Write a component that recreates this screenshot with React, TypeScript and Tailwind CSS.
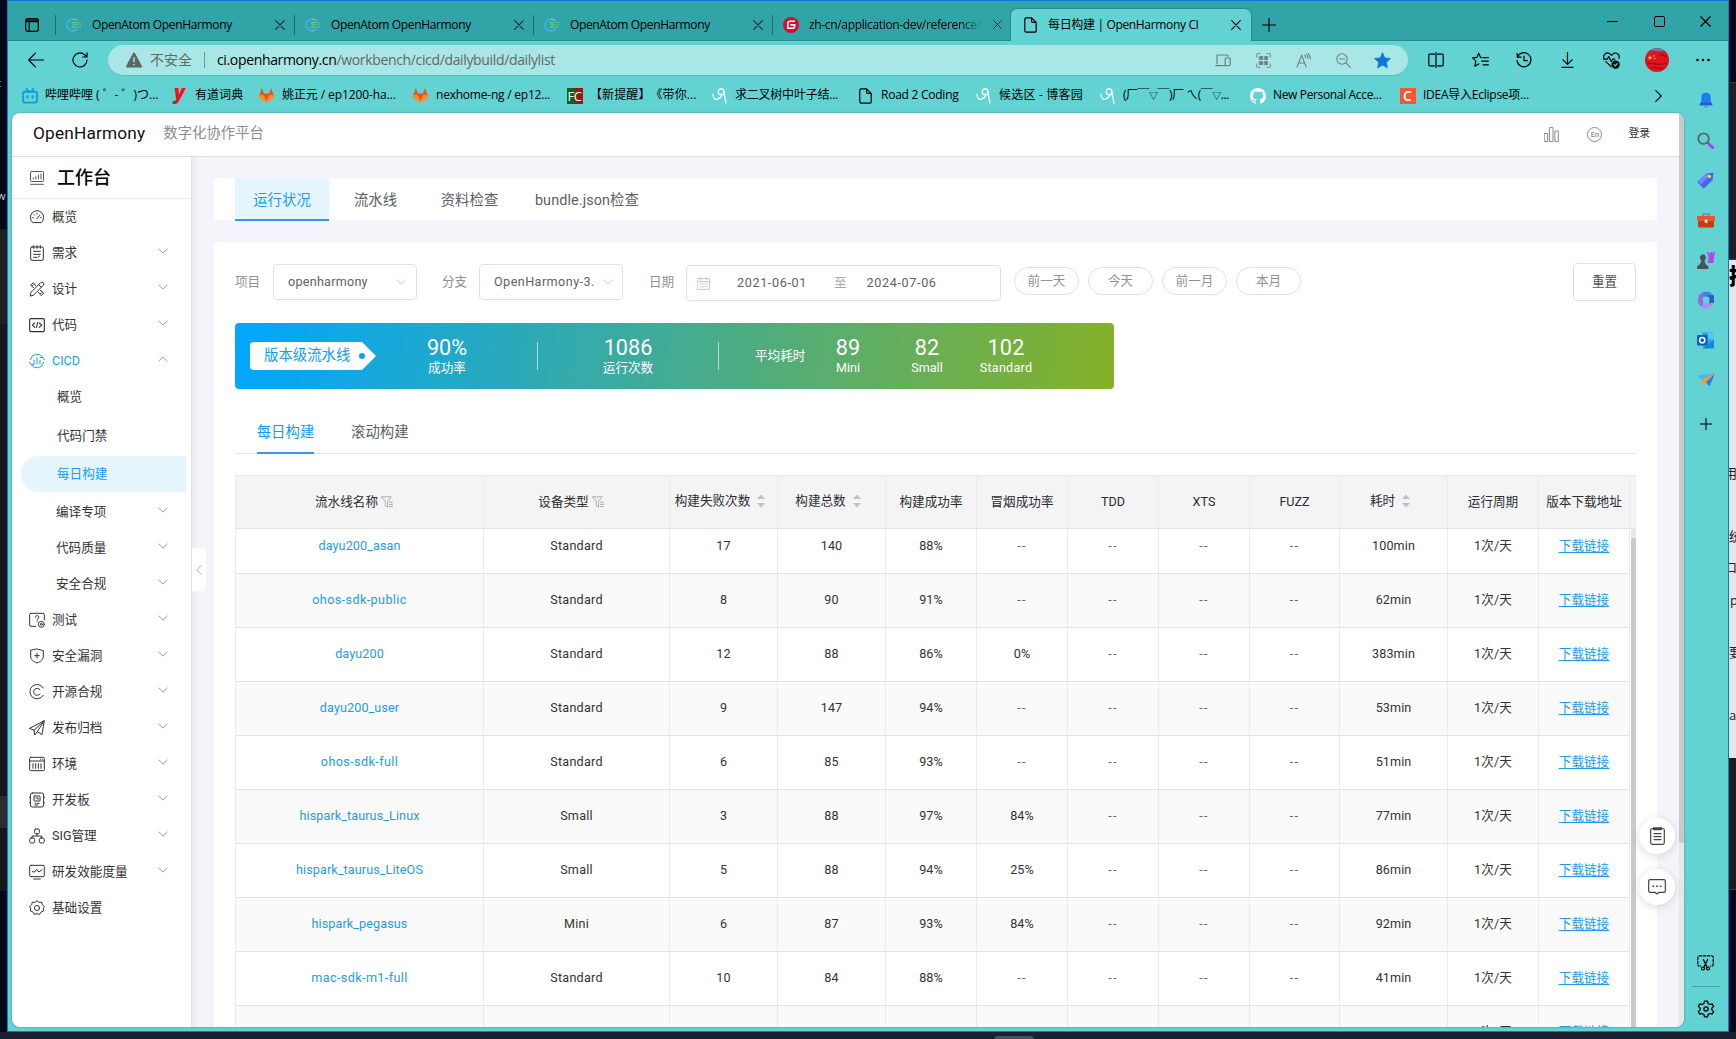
import React from 'react';

type P = { children: React.ReactNode; className?: string; sw?: number; vb?: string };

/** Thin line icon on a 24-unit grid, coloured by the current text colour. */
function Ic({ children, className = 'size-4', sw = 1.5, vb = '0 0 24 24' }: P) {
  return (
    <svg viewBox={vb} className={`shrink-0 ${className}`} fill="none" stroke="currentColor" strokeWidth={sw} strokeLinecap="round" strokeLinejoin="round">
      {children}
    </svg>
  );
}

const Cross = ({ className = 'size-[10px]' }: { className?: string }) => (
  <Ic className={className} vb="0 0 10 10" sw={1.1}><path d="M.7.7l8.6 8.6M9.3.7L.7 9.3" /></Ic>
);
const Chevron = ({ up = false, className = 'h-[6px] w-[10px] text-[#8f9399]' }: { up?: boolean; className?: string }) => (
  <Ic className={className} vb="0 0 10 6" sw={0.9}><path d={up ? 'M.8 5L5 .9 9.2 5' : 'M.8 1L5 5.1 9.2 1'} /></Ic>
);
const FilePage = () => (
  <Ic className="h-4 w-[13px]" vb="0 0 13 16" sw={1.2}><path d="M7.6.8H2.2C1.3.8.8 1.3.8 2.2v11.6c0 .9.5 1.4 1.4 1.4h8.6c.9 0 1.4-.5 1.4-1.4V5.4zM7.6.8v3.4c0 .8.4 1.2 1.2 1.2h3.4" /></Ic>
);

/* ---------- browser tabs ---------- */

const HarmonyMark = () => (
  <svg viewBox="0 0 16 14" className="h-[14px] w-4 shrink-0" fill="none">
    <path d="M7 1A6 6 0 0 0 7 13" stroke="#3fb4f6" strokeWidth="1.4" />
    <path d="M7 1c1.800 0 3.200.6 4.400 1.900M7 13c1.800 0 3.200-.6 4.400-1.900" stroke="#66c7a8" strokeWidth="1.300" />
    <path d="M5.500 4.800h4.500M11 4.800h1.500M13.600 4.800h1.200M6.500 7h4M11.600 7h1.400M14 7h1M5.500 9.200h4.500M11 9.200h1.500M13.600 9.200h1.200" stroke="#7fd45f" strokeWidth="1.1" />
  </svg>
);
const GiteeMark = () => (
  <svg viewBox="0 0 16 16" className="size-4 shrink-0">
    <circle cx="8" cy="8" r="8" fill="#d7102a" />
    <path d="M12 4.3H7.2a2.4 2.4 0 0 0-2.4 2.4v4.6h4.6a2.3 2.3 0 0 0 2.3-2.3V7.9H7.4" fill="none" stroke="#fff" strokeWidth="1.6" />
  </svg>
);

function TabStrip() {
  return (
    <div className="flex h-10 shrink-0 bg-[#31a4a7] border-b border-[#2b8c8f]">
      <div className="flex w-[47px] items-center pl-[17px] pt-[8px]">
        <Ic className="size-[14px] " vb="0 0 14 14" sw={1.2}><rect x=".7" y=".7" width="12.6" height="12.6" rx="2" /><path d="M1 2.2h12M1 3.6h12M4.2 4v9" /></Ic>
      </div>
      {[0, 1, 2].map((i) => (
        <div key={i} className="flex w-[239px] items-center pt-[8px]">
          <i className="h-5 w-px bg-[#1e6f72]" />
          <span className="ml-[10px]"><HarmonyMark /></span>
          <span className="ml-[10px] flex-1 tracking-[-0.36px]">OpenAtom OpenHarmony</span>
          <span className="mr-[9px] text-[#123]"><Cross /></span>
        </div>
      ))}
      <div className="flex w-[239px] items-center pt-[8px]">
        <i className="h-5 w-px bg-[#1e6f72]" />
        <span className="ml-[10px]"><GiteeMark /></span>
        <span className="ml-[10px] w-[173px] whitespace-nowrap tracking-[-0.34px] [mask-image:linear-gradient(to_right,#000_88%,transparent)]">zh-cn/application-dev/reference/</span>
        <span className="ml-[11px] text-[#123]"><Cross className="size-[9px]" /></span>
      </div>
      <div className="mt-2 flex h-8 w-[240px] items-center rounded-t-[6px] bg-[#62d2d3] pl-[13px] shadow-[0_0_2px_rgba(0,60,60,.7)] [clip-path:inset(-4px_-4px_0_-4px)]">
        <FilePage />
        <span className="ml-[11px] flex-1 tracking-[-0.34px]">每日构建 | OpenHarmony CI</span>
        <span className="mr-[10px]"><Cross /></span>
      </div>
      <div className="flex items-center pl-[11px] pt-[8px]">
        <Ic className="size-[14px]" vb="0 0 14 14" sw={1.1}><path d="M7 .5v13M.5 7h13" /></Ic>
      </div>
      <div className="ml-auto flex h-10 items-center pr-[17px]">
        <Ic className="size-[11px]" vb="0 0 11 11" sw={1}><path d="M0 5.500h11" /></Ic>
        <Ic className="ml-[36px] size-[11px]" vb="0 0 11 11" sw={1}><rect x=".5" y=".5" width="10" height="10" rx="1.2" /></Ic>
        <span className="ml-[35px]"><Cross className="size-[11px]" /></span>
      </div>
    </div>
  );
}

/* ---------- address bar ---------- */

function Toolbar() {
  return (
    <div className="flex h-[38px] shrink-0 items-center bg-[#62d2d3] text-[14px]">
      <Ic className="ml-5 h-4 w-4" vb="0 0 16 16" sw={1.2}><path d="M15.4 8H.8M7.4 1.2L.7 8l6.7 6.8" /></Ic>
      <Ic className="ml-7 h-4 w-4" vb="0 0 16 16" sw={1.2}><path d="M15 8a7 7 0 1 1-2.4-5.3L14.8 5M15 .8V5h-4.2" /></Ic>
      <div className="ml-5 flex h-[30px] w-[1300px] items-center rounded-full bg-[#a8e7e5] pl-[18px] pr-[16px] text-[#666] shadow-[0_1px_0_#58bfc0]">
        <svg viewBox="0 0 16 16" className="size-4"><path d="M8 .6a1 1 0 0 1 .9.5l7 12.8a1 1 0 0 1-.9 1.5H1a1 1 0 0 1-.9-1.5l7-12.800A1 1 0 0 1 8 .6z" fill="#5f6566" /><path d="M8 5.200v5M8 12v1.300" stroke="#a8e7e5" strokeWidth="1.5" /></svg>
        <span className="-mt-[2px] ml-2">不安全</span>
        <i className="ml-[12px] h-4 w-px bg-[#6f9b9a]" />
        <span className="-mt-[2px] ml-[12px] tracking-[-0.35px]"><span className="text-black">ci.openharmony.cn</span>/workbench/cicd/dailybuild/dailylist</span>
        <div className="ml-auto flex items-center text-[#6c8281]">
          <Ic className="h-[15px] w-4" vb="0 0 16 15" sw={1.2}><path d="M13 3.500V3a1 1 0 0 0-1-1H3a1 1 0 0 0-1 1v8M.6 12.600h9M11 5h3.400a.8.8 0 0 1 .8.8v6a.8.8 0 0 1-.8.8H11a.8.8 0 0 1-.8-.8v-6A.8.8 0 0 1 11 5z" /></Ic>
          <Ic className="ml-[25px] size-[15px]" vb="0 0 15 15" sw={0.900}>
            <path d="M.6 4V1.600a1 1 0 0 1 1-1H4M11 .6h2.400a1 1 0 0 1 1 1V4M14.400 11v2.400a1 1 0 0 1-1 1H11M4 14.400H1.600a1 1 0 0 1-1-1V11" />
            <path d="M3.600 3.600h3v3h-3zM8.600 3.600h3v3h-3zM3.600 8.600h3v3h-3zM8.600 8.600h3v3h-3z" fill="currentColor" />
          </Ic>
          <Ic className="ml-[25px] h-[15px] w-4" vb="0 0 16 15" sw={1.1}><path d="M1 14L5.600 2.200 10.200 14M2.600 10h6M9.600 4.600a5 5 0 0 0-.9-2.400M12 5.400a7 7 0 0 0-1.600-4.200M14.400 5.600A9 9 0 0 0 12.400.6" /></Ic>
          <Ic className="ml-[24px] size-[15px]" vb="0 0 15 15" sw={1.1}><circle cx="6" cy="6" r="5.200" /><path d="M10 10l4.400 4.400M3.600 6h4.800" /></Ic>
          <svg viewBox="0 0 24 24" className="ml-[22px] size-[19px]"><path d="M12 2.200l3 6.500 7 .8-5.200 4.800 1.400 7L12 17.800 5.800 21.300l1.400-7L2 9.500l7-.8z" fill="#0f76d8" stroke="#0f76d8" strokeLinejoin="round" /></svg>
        </div>
      </div>
      <Ic className="ml-5 h-4 w-4" vb="0 0 16 16" sw={1.2}><path d="M6.400 2.200H1.800a1 1 0 0 0-1 1v9.600a1 1 0 0 0 1 1h4.600M9.600 2.200h4.600a1 1 0 0 1 1 1v9.600a1 1 0 0 1-1 1H9.600M8 .5v15" /></Ic>
      <Ic className="ml-7 h-4 w-[17px]" vb="0 0 17 16" sw={1.2}><path d="M9.800 5.600L8.600 5.400 6.700 1.200 4.900 5.400l-4.300.5L3.800 8.900l-.9 5.300 3.800-2.300M11.200 5.600h5.200M9.600 9.200h6.800M11.200 12.800h5.200" /></Ic>
      <Ic className="ml-[27px] size-4" vb="0 0 16 16" sw={1.2}><path d="M1.200 1.400v3.800h3.800M1.500 5A7 7 0 1 1 1 8.600M8 4v4.600h3.400" /></Ic>
      <Ic className="ml-[28px] h-4 w-[15px]" vb="0 0 15 16" sw={1.2}><path d="M7.500.6v11.600M2.800 7.800l4.700 4.600 4.700-4.600M2 15.300h11" /></Ic>
      <Ic className="ml-[28px] h-[17px] w-[17px]" vb="0 0 17 17" sw={1.2}>
        <path d="M1 6.400C-.2 3 3-.2 6.200 1.400L8.500 3.400l2.300-2C14 0 17 2.800 16 6.400M.8 7.200h3.400l1.600-2.600 2.400 4.800 1.600-2.200h2M2.600 9.400l5.400 5.200" />
        <circle cx="12.600" cy="12.600" r="3.600" fill="#111" /><path d="M11 12.600l1.200 1.200 2-2.200" stroke="#62d2d3" />
      </Ic>
      <svg viewBox="0 0 24 24" className="ml-[25px] size-6">
        <circle cx="12" cy="12" r="12" fill="#e2131d" />
        <path d="M4.500 2.700A12 12 0 0 1 19.500 2.700C15 5 8 1.500 4.500 2.700z" fill="#5c7fb0" />
        <path d="M2 16c5-3 9 3 20-1M5 20c5-2 8 2 14 0M14 6c3 2 5 0 8 3" stroke="#a30a12" strokeWidth="1.3" fill="none" />
        <path d="M5 7.500l.7 1.400 1.500.2-1.100 1 .3 1.500L5 10.900l-1.400.7.300-1.500-1.100-1 1.500-.2z" fill="#ffd83a" />
        <circle cx="9" cy="8" r=".7" fill="#ffd83a" /><circle cx="9.800" cy="10.500" r=".7" fill="#ffd83a" />
      </svg>
      <svg viewBox="0 0 14 4" className="ml-[27px] h-1 w-[14px]"><circle cx="1.500" cy="2" r="1.3" /><circle cx="7" cy="2" r="1.3" /><circle cx="12.500" cy="2" r="1.3" /></svg>
    </div>
  );
}

/* ---------- bookmarks ---------- */

const GitLab = () => (
  <svg viewBox="0 0 18 17" className="h-[17px] w-[18px]">
    <path d="M4 .5L1.300 8.500 9 16l7.700-7.500L14 .5 11.600 6.500H6.400z" fill="#e5532a" />
    <path d="M1.300 8L.5 10.300 9 16.500l8.500-6.200L16.700 8l-4.500-.2L9 14 5.800 7.800z" fill="#f98e2b" />
  </svg>
);
const Blog = () => (
  <Ic className="size-4" vb="0 0 16 16" sw={1.4}><g stroke="#eefcfc"><path d="M1 6.500c.3 4.500 2.600 5.600 5 4.400 2-1 3.400-2.200 3.800-3.600" /><ellipse cx="9" cy="3.800" rx="2.800" ry="3" /><path d="M11.800 3c.3 4 1.200 8 2.200 12" /></g></Ic>
);
const GitHub = () => (
  <svg viewBox="0 0 16 16" className="size-4" fill="#fff"><path d="M8 0C3.580 0 0 3.580 0 8c0 3.540 2.290 6.530 5.470 7.590.4.070.55-.17.55-.38 0-.19-.01-.82-.01-1.490-2.010.37-2.530-.49-2.690-.94-.09-.23-.48-.94-.82-1.130-.28-.15-.68-.52-.01-.53.63-.01 1.080.58 1.230.82.72 1.210 1.870.87 2.330.66.07-.52.28-.87.51-1.070-1.780-.2-3.640-.89-3.640-3.950 0-.87.31-1.590.82-2.150-.08-.2-.36-1.020.08-2.120 0 0 .67-.21 2.200.82.64-.18 1.320-.27 2-.27s1.360.09 2 .27c1.530-1.040 2.200-.82 2.200-.82.44 1.100.16 1.920.08 2.120.51.56.82 1.270.82 2.150 0 3.070-1.870 3.750-3.650 3.950.29.25.54.73.54 1.480 0 1.070-.01 1.930-.01 2.200 0 .21.15.46.55.38A8 8 0 0 0 16 8c0-4.420-3.580-8-8-8z" /></svg>
);

const bookmarks: { w: string; icon: React.ReactNode; text: React.ReactNode }[] = [
  { w: 'w-[150px] tracking-[-0.02px]', text: '哔哩哔哩 ( ゜- ゜)つ...', icon: <Ic className="size-4" vb="0 0 16 16" sw={1.9}><g stroke="#0d9fdf"><rect x="1" y="3.800" width="14" height="10.800" rx="2" /><path d="M4.600 1l2 2.400M11.400 1l-2 2.400M5.400 8v1.600M10.600 8v1.600" /></g></Ic> },
  { w: 'w-[87px] tracking-[0.050px]', text: '有道词典', icon: <span className="-mt-[7px] w-4 text-center font-['Noto_Sans'] text-[20px] font-black italic leading-[16px] text-[#f0131e]">y</span> },
  { w: 'w-[154px] tracking-[-0.1px]', text: '姚正元 / ep1200-ha...', icon: <GitLab /> },
  { w: 'w-[154px] tracking-[-0.22px]', text: 'nexhome-ng / ep12...', icon: <GitLab /> },
  { w: 'w-[145px] [text-spacing-trim:space-all] tracking-[0.1px]', text: '【新提醒】《带你...', icon: <span className="flex size-4 items-center justify-center bg-[linear-gradient(90deg,#10601a_50%,#a31212_50%)] text-[13px] leading-4 tracking-[-0.5px] text-white">FC</span> },
  { w: 'w-[146px] tracking-[-0.22px]', text: '求二叉树中叶子结...', icon: <Blog /> },
  { w: 'w-[118px] tracking-[-0.25px]', text: 'Road 2 Coding', icon: <FilePage /> },
  { w: 'w-[124px] tracking-[0.2px]', text: '候选区 - 博客园', icon: <Blog /> },
  { w: 'w-[150px] tracking-[-0.5px]', text: <>(厂￣<span className="text-[9px]">▽</span>￣)厂 ㄟ(￣<span className="text-[9px]">▽</span>...</>, icon: <Blog /> },
  { w: 'w-[150px] tracking-[-0.35px]', text: 'New Personal Acce...', icon: <GitHub /> },
  { w: 'w-[140px] tracking-[-0.25px]', text: 'IDEA导入Eclipse项...', icon: <span className="flex size-4 items-center justify-center bg-[#fc5531] text-[14px] font-semibold leading-4 text-white">C</span> },
];

function Bookmarks() {
  return (
    <div className="flex h-[34px] shrink-0 items-center pl-[13px] pr-[22px]">
      {bookmarks.map((b, i) => (
        <div key={i} className={`-mt-px flex shrink-0 items-center ${b.w}`}>
          <span className="flex w-[17px] shrink-0 justify-center tracking-normal">{b.icon}</span>
          <span className="-mt-px ml-[7px] whitespace-nowrap">{b.text}</span>
        </div>
      ))}
      <Ic className="ml-auto h-3 w-[7px]" vb="0 0 7 12" sw={1.2}><path d="M.8.6L6.200 6 .8 11.400" /></Ic>
    </div>
  );
}

/* ---------- site navigation ---------- */

const K = 'size-4';
const icons: Record<string, React.ReactNode> = {
  overview: <Ic className={K}><path d="M5.200 20A10 10 0 1 1 18.800 20zM12 14.500l3.500-4.500M5.500 13h1M17.500 13h1M12 6.500v1M7.600 8.600l.7.700M16.400 8.600l-.4.400" /></Ic>,
  need: <Ic className={K}><rect x="2.500" y="3" width="19" height="20" rx="2" /><path d="M7 1v4M12 1v4M17 1v4M7 9.500h10M7 14h10M7 18.500h5M14 18l2-1.500" /></Ic>,
  design: <Ic className={K}><path d="M2 22l1-5L17.500 2.500a2.500 2.500 0 0 1 4 4L7 21zM14.500 5.500l4 4M10 7L6.500 2.500l-4 4L7 10M14 17l4.500 5 3.500-4-5-4M5 7.500l1.500-1.500M17.500 19l1.500-1.500" /></Ic>,
  code: <Ic className={K} sw={1.7}><rect x="1" y="2.500" width="22" height="19.500" rx="2" /><path d="M8.500 9L5 12.200l3.500 3.300M15.500 9l3.500 3.200-3.500 3.300M13 8.500l-2 7.500" /></Ic>,
  cicd: <Ic className={K}><path d="M2 10A10.200 10.200 0 0 1 20.500 6.200M22 14A10.200 10.200 0 0 1 3.500 17.800M1 14l2.500 3.800L7.500 17M23 10l-2.500-3.800-4 .8M7.500 11v5.500M12 7v9.500M16.500 11v5.500" /></Ic>,
  test: <Ic className={K}><path d="M10 21.500H3a2 2 0 0 1-2-2V4a2 2 0 0 1 2-2h18a2 2 0 0 1 2 2v8M9.500 8a2.600 2.600 0 1 1 3.800 2.300c-.9.5-1.300 1-1.300 2M12 14.800v.2" /><circle cx="18.500" cy="18.500" r="4.500" /><circle cx="18.500" cy="18.500" r="1.5" /></Ic>,
  shield: <Ic className={K}><path d="M12 1.500l9.500 2.500v8c0 5-3.500 8.500-9.500 10.500C6 20.500 2.500 17 2.500 12V4zM12 8v7M8.500 11.500h7" /></Ic>,
  open: <Ic className={K}><path d="M21.500 17A10.800 10.800 0 1 1 21.500 6" /><path d="M16.500 15a5.300 5.300 0 1 1 0-6.500" /></Ic>,
  send: <Ic className={K}><path d="M1 12.500L23 1l-3.500 21-7-4.500-4 5-1-7zM7.500 15.500L23 1 12.500 17.500" /></Ic>,
  env: <Ic className={K}><rect x="1" y="2" width="22" height="20" rx="1.5" /><path d="M1 7.500h22M17 4.800h.5M20 4.800h.5M6 11.500v7M10 11.500v7M14 11.500v7M18 11.500v7" /></Ic>,
  board: <Ic className={K}><rect x="2" y="1.500" width="20" height="21" rx="3" /><rect x="7.500" y="6" width="9" height="7.500" rx="1" /><path d="M10.500 9h3v2M9 17h1M12 17h3M9 19.500h4M1 8h1M1 16h1M22 8h1M22 16h1" /></Ic>,
  sig: <Ic className={K}><rect x="8.500" y="1.500" width="7" height="7" rx="1.5" /><rect x="1" y="15" width="7.500" height="7.500" rx="2.500" /><rect x="15.500" y="15" width="7.500" height="7.500" rx="2.500" /><path d="M12 8.500V12M4.800 15v-3h14.400v3" /></Ic>,
  perf: <Ic className={K}><rect x="1" y="2" width="22" height="17" rx="2" /><path d="M5 11.500l3.500.5 3-4 3.500 4 4.500-3.500M7 22.500h10" /></Ic>,
  gear: <Ic className={K}><path d="M12 1l3 2.600 4-.4 1 3.900 3 2.600-1.600 2.800.6 4-3.800 1.300L16 21.500l-4-.9-4 .9-2.200-3.700L2 16.500l.6-4L1 9.700l3-2.600 1-3.900 4 .4z" /><circle cx="12" cy="12" r="3.8" /></Ic>,
};

function NavItem({ icon, text, open, flat }: { icon: string; text: string; open?: boolean; flat?: boolean }) {
  return (
    <div className={`flex h-9 items-center pl-[17px] ${open ? 'text-[#199df5]' : 'text-[#333]'}`}>
      {icons[icon]}
      <span className="ml-[7px] flex-1">{text}</span>
      {!flat && <span className="-mt-[4px] mr-[23px]"><Chevron up={open} /></span>}
    </div>
  );
}

function SubGroup({ text }: { text: string }) {
  return (
    <div className="flex h-9 items-center pl-[44px]">
      <span className="flex-1">{text}</span>
      <span className="-mt-[4px] mr-[23px]"><Chevron /></span>
    </div>
  );
}

function Sidebar() {
  return (
    <nav className="flex w-[180px] shrink-0 flex-col border-r border-[#dfe1e5] bg-white text-[12.6px] text-[#333]">
      <div className="flex h-[42px] shrink-0 items-center border-b border-[#ebebee] pl-[18px]">
        <Ic className="size-[14px] text-[#444]" vb="0 0 14 14" sw={0.9}><rect x=".5" y=".5" width="13" height="10" rx="1" /><path d="M3.200 8V7M5.800 8V5.500M8.400 8V4M11 8V3M.5 13.300h13" /></Ic>
        <span className="ml-[13px] text-[18px] font-medium text-black">工作台</span>
      </div>
      <NavItem icon="overview" text="概览" flat />
      <NavItem icon="need" text="需求" />
      <NavItem icon="design" text="设计" />
      <NavItem icon="code" text="代码" />
      <NavItem icon="cicd" text="CICD" open />
      <div className="flex h-9 items-center pl-[45px]">概览</div>
      <div className="mt-[3px] flex h-9 items-center pl-[45px]">代码门禁</div>
      <div className="ml-[9px] mr-[5px] mt-[2px] flex h-9 items-center rounded-l-full bg-[#e4f5fe] pl-[36px] text-[#199df5]">每日构建</div>
      <div className="mt-[2px]">
        <SubGroup text="编译专项" />
        <SubGroup text="代码质量" />
        <SubGroup text="安全合规" />
      </div>
      <NavItem icon="test" text="测试" />
      <NavItem icon="shield" text="安全漏洞" />
      <NavItem icon="open" text="开源合规" />
      <NavItem icon="send" text="发布归档" />
      <NavItem icon="env" text="环境" />
      <NavItem icon="board" text="开发板" />
      <NavItem icon="sig" text="SIG管理" />
      <NavItem icon="perf" text="研发效能度量" />
      <NavItem icon="gear" text="基础设置" flat />
    </nav>
  );
}

function SiteHeader() {
  return (
    <header className="flex h-[44px] shrink-0 items-center border-b border-[#dcdfe3] bg-white pl-[21px] pr-[29px]">
      <span className="-mt-[2px] text-[17.3px] tracking-[0.15px] text-[#111]">OpenHarmony</span>
      <span className="-mt-[1px] ml-[18px] text-[14.4px] text-[#8a8d92]">数字化协作平台</span>
      <div className="ml-auto flex items-center text-[#8a8a8a]">
        <Ic className="size-[15px]" vb="0 0 15 15" sw={1}><path d="M.6 6.500h3v8h-3zM5.800.6h3.200v13.900H5.800zM11.300 4h3v10.500h-3z" /></Ic>
        <span className="ml-[28px] flex size-[15px] items-center justify-center rounded-full border border-[#8a8a8a] text-[7.5px] font-medium leading-none">En</span>
        <span className="ml-[26px] text-[10.8px] text-[#333]">登录</span>
      </div>
    </header>
  );
}

/* ---------- main content ---------- */

function Filters() {
  const box = 'flex h-9 items-center rounded-[4px] border border-[#dcdfe6] text-[#606266]';
  const pill = 'flex h-7 w-[65px] items-center justify-center rounded-full border border-[#e0e1e4]';
  return (
    <div className="flex h-[38px] items-center text-[#8f9299]">
      <span className="w-[25px] whitespace-nowrap">项目</span>
      <div className={`${box} ml-[13px] w-[144px] pl-[14px] pr-[10px] tracking-[0.25px]`}>
        <span className="mt-px flex-1">openharmony</span><Chevron className="h-[6px] w-[10px] text-[#bfc4cc]" />
      </div>
      <span className="ml-[25px] w-[25px] whitespace-nowrap">分支</span>
      <div className={`${box} ml-[12px] w-[144px] pl-[14px] pr-[9px] tracking-[0.45px]`}>
        <span className="mt-px flex-1 whitespace-nowrap">OpenHarmony-3.</span><Chevron className="h-[6px] w-[10px] text-[#bfc4cc]" />
      </div>
      <span className="ml-[26px] w-[25px] whitespace-nowrap">日期</span>
      <div className={`${box} ml-[12px] mt-[2px] w-[315px] pl-[10px]`}>
        <Ic className="size-[13px] text-[#bcc1ca]" vb="0 0 13 13" sw={0.9}><rect x=".6" y="1.600" width="11.800" height="10.800" /><path d="M.6 4.600h11.800M3.600.5v2M9.400.5v2M3 7h1.400M5.800 7h1.400M8.600 7H10M3 9.800h1.400M5.800 9.800h1.400M8.600 9.800H10" /></Ic>
        <span className="ml-[27px] tracking-[0.64px]">2021-06-01</span>
        <span className="ml-[27px] text-[#a8abb2]">至</span>
        <span className="ml-[20px] tracking-[0.64px]">2024-07-06</span>
      </div>
      <div className="-mt-[2px] ml-[13px] flex gap-[9px]">
        <span className={pill}>前一天</span><span className={pill}>今天</span><span className={pill}>前一月</span><span className={pill}>本月</span>
      </div>
      <div className="ml-auto flex h-[38px] w-[63px] items-center justify-center rounded-[4px] border border-[#dcdfe6] text-[#555]">重置</div>
    </div>
  );
}

function Stat({ n, label, className }: { n: string; label: string; className: string }) {
  return (
    <div className={`flex flex-col items-center whitespace-nowrap ${className}`}>
      <span className="text-[21.6px] leading-6">{n}</span>
      <span className="leading-4">{label}</span>
    </div>
  );
}

function Banner() {
  return (
    <div className="mt-[22px] flex h-[66px] w-[879px] items-center rounded-[4px] bg-[linear-gradient(100deg,#00a6ff,#85b127)] text-white">
      <div className="ml-[15px] flex h-7 w-[126px] items-center rounded-l-[4px] bg-white pl-[14px] text-[14.4px] text-[#0e9df5] [clip-path:polygon(0_0,112px_0,100%_50%,112px_100%,0_100%)]">
        <span className="w-[86px] whitespace-nowrap">版本级流水线</span>
        <i className="ml-[9px] size-[6px] rounded-full bg-[#0aa2fb]" />
      </div>
      <Stat n="90%" label="成功率" className="ml-[21px] w-[100px]" />
      <i className="ml-10 h-7 w-px bg-white/60" />
      <Stat n="1086" label="运行次数" className="ml-10 w-[100px]" />
      <i className="ml-10 h-7 w-px bg-white/60" />
      <span className="ml-9 w-[51px] whitespace-nowrap">平均耗时</span>
      <Stat n="89" label="Mini" className="ml-3 w-[60px]" />
      <Stat n="82" label="Small" className="ml-[19px] w-[60px]" />
      <Stat n="102" label="Standard" className="ml-[19px] w-[60px] tracking-[0.25px]" />
    </div>
  );
}

const Filter = () => (
  <Ic className="ml-[3px] mr-[11px] size-3 text-[#a0a3aa]" vb="0 0 12 12" sw={0.9}><path d="M.6.8h9.600L6.600 5.400v5.800L4.200 9.600V5.400zM8.400 6.200h3M8.400 8.400h3M8.400 10.600h3" /></Ic>
);
const Sort = () => (
  <svg viewBox="0 0 8 16" className="ml-[7px] mr-[7px] h-4 w-2 shrink-0" fill="#bcc1c9"><path d="M4 1.500l4 4.500H0zM4 14.500L0 10h8z" /></svg>
);

const grid = 'grid grid-cols-[248px_186px_108px_108px_91px_91px_91px_91px_90px_108px_91px_91px]';
const heads: [string, 'filter' | 'sort' | ''][] = [
  ['流水线名称', 'filter'], ['设备类型', 'filter'], ['构建失败次数', 'sort'], ['构建总数', 'sort'], ['构建成功率', ''], ['冒烟成功率', ''],
  ['TDD', ''], ['XTS', ''], ['FUZZ', ''], ['耗时', 'sort'], ['运行周期', ''], ['版本下载地址', ''],
];
const D = '--';
const rows: string[][] = [
  ['dayu200_asan', 'Standard', '17', '140', '88%', D, D, D, D, '100min'],
  ['ohos-sdk-public', 'Standard', '8', '90', '91%', D, D, D, D, '62min'],
  ['dayu200', 'Standard', '12', '88', '86%', '0%', D, D, D, '383min'],
  ['dayu200_user', 'Standard', '9', '147', '94%', D, D, D, D, '53min'],
  ['ohos-sdk-full', 'Standard', '6', '85', '93%', D, D, D, D, '51min'],
  ['hispark_taurus_Linux', 'Small', '3', '88', '97%', '84%', D, D, D, '77min'],
  ['hispark_taurus_LiteOS', 'Small', '5', '88', '94%', '25%', D, D, D, '86min'],
  ['hispark_pegasus', 'Mini', '6', '87', '93%', '84%', D, D, D, '92min'],
  ['mac-sdk-m1-full', 'Standard', '10', '84', '88%', D, D, D, D, '41min'],
  ['', '', '', '', '', '', '', '', '', ''],
];

function cellTone(value: string, column: number) {
  if (column === 0) return value.includes('-') ? 'text-[#1f9be8] tracking-[0.4px]' : 'text-[#1f9be8] tracking-[0.1px]';
  if (column === 1) return 'text-[#333] tracking-[0.25px]';
  if (column === 11) return 'text-[#1f9be8] underline underline-offset-2';
  if (value === D) return 'text-[#666] tracking-[1.3px]';
  return 'text-[#333] tracking-[0.1px]';
}

function Table() {
  return (
    <div className="mt-[21px] flex min-h-0 flex-1 flex-col border-l border-t border-[#e9ebf1]">
      <div className="flex h-[53px] shrink-0 border-b border-r border-b-[#e2e3e5] border-r-[#ebedf2] bg-[#f4f4f5] text-[#2b2d31]">
        <div className={grid}>
          {heads.map(([t, kind]) => (
            <div key={t} className={`flex items-center justify-center whitespace-nowrap border-r border-[#e9ebf2] ${kind === 'sort' ? 'pb-[2px]' : ''}`}>
              <span>{t}</span>
              {kind === 'filter' && <Filter />}
              {kind === 'sort' && <Sort />}
            </div>
          ))}
        </div>
      </div>
      <div className="flex min-h-0 flex-1 overflow-hidden">
        <div className="-mt-[9px]">
          {rows.map((r, i) => (
            <div key={i} className={`${grid} h-[54px] ${i % 2 ? 'bg-[#fafafa]' : 'bg-white'}`}>
              {[...r, '1次/天', '下载链接'].map((c, j) => (
                <div key={j} className={`flex items-center justify-center border-b border-r border-b-[#e2e3e5] border-r-[#e9ebf2] ${cellTone(c, j)}`}>{c}</div>
              ))}
            </div>
          ))}
        </div>
        <div className="ml-px w-[5px] bg-[#e7e8ea] pt-[9px]"><div className="h-full rounded-t-[2px] bg-[#c9cacd]" /></div>
      </div>
    </div>
  );
}

function Main() {
  return (
    <main className="relative flex min-w-0 flex-1 flex-col bg-[#f4f5fa] pl-[22px] pr-[22px] pt-[21px] text-[12.6px] shadow-[inset_6px_0_8px_-6px_rgba(0,0,0,.08)]">
      <div className="flex h-[42px] shrink-0 bg-white pl-[21px] text-[14.4px] text-[#5c5f66]">
        <span className="z-10 flex h-[43px] w-[94px] items-center justify-center border-b-2 border-[#2f98f5] bg-[#e4f5fe] pt-[4px] text-[#1a9df5]">运行状况</span>
        <span className="flex w-[93px] items-center justify-center pt-[3px]">流水线</span>
        <span className="flex w-[95px] items-center justify-center pt-[3px]">资料检查</span>
        <span className="flex w-[140px] items-center justify-center pt-[3px] tracking-[0.1px]">bundle.json检查</span>
      </div>
      <div className="mt-[22px] flex min-h-0 flex-1 flex-col bg-white px-[21px] pt-[21px]">
        <Filters />
        <Banner />
        <div className="mt-[24px] flex h-[41px] shrink-0 border-b border-[#e4e7ed] pl-[22px] text-[14.4px] text-[#5c5f66]">
          <span className="flex h-[41px] w-[57px] items-center justify-center whitespace-nowrap border-b-2 border-[#2f98f5] pt-px text-[#0e9df5]">每日构建</span>
          <span className="ml-[37px] flex items-center">滚动构建</span>
        </div>
        <Table />
      </div>
      <div className="absolute left-0 top-[391px] flex h-[43px] w-[14px] items-center justify-center rounded-r-[4px] bg-white text-[#c9ccd2]">
        <Ic className="h-[10px] w-[6px]" vb="0 0 6 10" sw={1.2}><path d="M5.200.6L.8 5l4.400 4.400" /></Ic>
      </div>
      <div className="absolute right-[4px] top-[661px] flex flex-col gap-[15px] text-[#444]">
        <div className="flex size-9 items-center justify-center rounded-full bg-white shadow-[0_2px_10px_rgba(0,0,0,.14)]">
          <Ic className="h-[18px] w-[15px]" vb="0 0 15 18" sw={1.2}><rect x=".7" y="1.500" width="13.600" height="15.800" rx="1.5" /><path d="M3.500.8h8v1.800h-8zM4 6.600h7M4 9.600h7M4 12.600h7" /></Ic>
        </div>
        <div className="flex size-9 items-center justify-center rounded-full bg-white shadow-[0_2px_10px_rgba(0,0,0,.14)]">
          <Ic className="h-[16px] w-[18px]" vb="0 0 18 16" sw={1.2}><path d="M2 .7h14a1.300 1.300 0 0 1 1.300 1.300v10a1.300 1.300 0 0 1-1.300 1.300h-5L9 15l-2-1.700H2A1.300 1.300 0 0 1 .7 12V2A1.300 1.300 0 0 1 2 .7z" /><path d="M5 7.200h.6M8.700 7.200h.6M12.400 7.200h.6" strokeWidth="1.6" /></Ic>
        </div>
      </div>
    </main>
  );
}

/* ---------- browser side rail ---------- */

const rail: React.ReactNode[] = [
  <svg viewBox="0 0 16 18" className="h-[17px] w-4"><path d="M8 .8c3.400 0 5 2.200 5 5V10l2 4H1l2-4V5.800c0-2.800 1.600-5 5-5z" fill="#1c7df0" /><path d="M1 14l1.600-3h10.800l1.600 3z" fill="#2458d8" /><path d="M6 15h4c0 2-4 2-4 0z" fill="#777" /></svg>,
  <svg viewBox="0 0 17 17" className="size-[17px]" fill="none"><circle cx="6.600" cy="6.600" r="5.300" stroke="#5d6468" strokeWidth="1.8" /><path d="M10.500 10.500l2 2" stroke="#666" strokeWidth="2" /><path d="M12.500 12.500l3 3" stroke="#b53cf0" strokeWidth="3" strokeLinecap="round" /></svg>,
  <svg viewBox="0 0 17 17" className="size-[17px]"><path d="M9.500 1.500L15 .8a1 1 0 0 1 1.200 1.200L15.600 8 7.800 15.800a1.500 1.500 0 0 1-2 0L1 11a1.500 1.500 0 0 1 0-2z" fill="#4a62f0" /><path d="M9.500 1.500L1 9.600l3 2.800L13 3z" fill="#6f8bff" /><circle cx="12.400" cy="4.400" r="1.7" fill="#ffd84a" /></svg>,
  <svg viewBox="0 0 18 15" className="h-[15px] w-[18px]"><path d="M6 3V1.200h6V3" fill="none" stroke="#7a8186" strokeWidth="1.3" /><rect y="3" width="18" height="5" rx="1" fill="#e4572e" /><path d="M1 8h16v5a1.500 1.500 0 0 1-1.500 1.500h-13A1.500 1.500 0 0 1 1 13z" fill="#c43e10" /><rect x="7.600" y="6.500" width="3" height="3.400" rx="1" fill="#ddd" /></svg>,
  <svg viewBox="0 0 18 18" className="size-[18px]"><path d="M10 1h2v1.500h1.300V1h2v1.500h1L16 1h2l-1 5-.5 6H11l.6-6z" fill="#b445f5" /><path d="M6 3.600a3 3 0 0 1 2 5.200l-.4.700c.2 2 .6 3 2 4.500l1.800 1.500V18H0v-2.500L2 14c1.500-1.500 2-2.500 2.200-4.500l-.4-.7A3 3 0 0 1 6 3.600z" fill="#4d5355" /></svg>,
  <svg viewBox="0 0 18 18" className="size-[18px]"><path d="M7 .5L1.500 4.500 1 12l3 3.500 2.500-2L5.500 6l4-2.500z" fill="#8f6fdc" /><path d="M6 1l6-.2 5 3.700v3.500L12.500 6 8 5.500 5.800 7z" fill="#3a86e6" /><path d="M17 4.500V12l-3.500 3-1.500-3 .6-4.500L10 4.200z" fill="#2c5fc4" /><path d="M4 15.500L7.500 12l5 .3 4.500-.5-6 5.700H7z" fill="#b18cf0" /></svg>,
  <svg viewBox="0 0 17 17" className="size-[17px]"><rect x="5" y=".5" width="12" height="14" rx="1" fill="#2f9fe8" /><path d="M11 .5h6v7h-6z" fill="#50c8f4" /><path d="M5 16.500L17 8.500v7a1 1 0 0 1-1 1z" fill="#1487d8" /><rect y="3" width="10.500" height="10.500" rx="1" fill="#0a62b8" /><circle cx="5.200" cy="8.200" r="2.600" fill="none" stroke="#fff" strokeWidth="1.5" /></svg>,
  <svg viewBox="0 0 18 14" className="h-[14px] w-[18px]"><path d="M0 2.400L18 .5 5.500 7.500z" fill="#45b6f2" /><path d="M18 .5L12.500 13.500 8 8.500z" fill="#2a7fe6" /><path d="M18 .5L4.500 7l1.500 6L9 9z" fill="#f5a31c" /></svg>,
];

function Rail() {
  return (
    <aside className="flex w-[44px] shrink-0 flex-col items-center pr-px pt-px">
      {rail.map((n, i) => <div key={i} className="flex h-10 items-center">{n}</div>)}
      <div className="mt-[4px] flex h-10 items-center"><Ic className="size-3" vb="0 0 12 12" sw={1.1}><path d="M6 .3v11.400M.3 6h11.400" /></Ic></div>
      <div className="mb-[15px] mt-auto"><Ic className="h-4 w-[17px]" vb="0 0 17 16" sw={1.2}><path d="M3.600 11H2.200A1.400 1.400 0 0 1 .8 9.600V2.200A1.400 1.400 0 0 1 2.200.8h12.600a1.400 1.400 0 0 1 1.400 1.400v7.400a1.400 1.400 0 0 1-1.400 1.400h-1.400" strokeDasharray="2.600 1.600" /><path d="M6.400 4.500l3.600 7.500M10.600 4.500L7 12" /><circle cx="6" cy="13.500" r="1.5" /><circle cx="11" cy="13.500" r="1.5" /></Ic></div>
      <i className="h-px w-7 bg-[#4c9fa0]" />
      <div className="mb-[13px] mt-[13px]"><Ic className="size-[18px]" sw={1.7}><path d="M10 1.500h4l.8 3.200 2.200 1.300 3.200-.9 2 3.400-2.400 2.300v2.400l2.400 2.300-2 3.400-3.200-.9-2.200 1.300-.8 3.200h-4l-.8-3.200L7 18l-3.200.9-2-3.400 2.400-2.300v-2.400L1.800 8.500l2-3.400L7 6l2.200-1.300z" /><circle cx="12" cy="12" r="2.8" /></Ic></div>
    </aside>
  );
}

/* ---------- desktop edges behind the window ---------- */

function LeftEdge() {
  return (
    <div className="relative flex w-[7px] shrink-0 flex-col overflow-hidden text-[11px] leading-none text-[#ccc]">
      <div className="h-[229px] bg-[#030a18]" />
      <div className="h-[95px] bg-[#1f1f20]" />
      <div className="h-[472px] bg-[#171717]" />
      <div className="h-[32px] bg-[#2d2d2e]" />
      <div className="h-[63px] bg-[#171717]" />
      <div className="flex-1 bg-[#030a18]" />
      <span className="absolute -left-[3px] top-[190px]">w</span>
      <span className="absolute -left-[3px] top-[77px] text-[#e8b27a]">t</span>
    </div>
  );
}

function RightEdge() {
  return (
    <div className="relative flex w-[7px] shrink-0 flex-col overflow-hidden whitespace-nowrap text-[13px] leading-none text-[#222]">
      <div className="h-[82px] bg-[#020817]" />
      <div className="h-[178px] border-y border-[#3a3a3c] bg-[#1f1f21]" />
      <div className="h-[498px] bg-[#e6e6e7]" />
      <div className="h-[132px] border-b border-[#3a3a3c] bg-[#1c1c1d]" />
      <div className="flex-1 bg-[#020817]" />
      <span className="absolute left-0 top-[264px] text-[22px] font-black text-black">接</span>
      <span className="absolute -left-[5px] top-[467px]">用</span>
      <span className="absolute left-0 top-[530px]">统</span>
      <span className="absolute -left-[5px] top-[561px]">口</span>
      <span className="absolute left-px top-[594px]">p</span>
      <span className="absolute left-0 top-[646px]">要</span>
      <span className="absolute left-0 top-[709px]">a</span>
    </div>
  );
}

export default function App() {
  return (
    <div className="flex h-[1039px] w-[1736px] flex-col overflow-hidden bg-[#1b2130] font-['Open_Sans','Noto_Sans_CJK_SC',sans-serif] text-[12px] text-black">
      <div className="flex h-[1032px] shrink-0">
        <LeftEdge />
        <div className="flex w-[1722px] shrink-0 flex-col border border-[#0c78d4] bg-[#62d2d3]">
          <TabStrip />
          <Toolbar />
          <div className="flex min-h-0 flex-1">
            <div className="flex w-[1676px] shrink-0 flex-col">
              <Bookmarks />
              <div className="mb-[4px] ml-[4px] flex min-h-0 flex-1 overflow-hidden rounded-[8px] font-['Roboto','Noto_Sans_CJK_SC',sans-serif] shadow-[0_0_2px_rgba(0,70,70,.5)]">
                <div className="flex w-[1667px] flex-col">
                  <SiteHeader />
                  <div className="flex min-h-0 flex-1">
                    <Sidebar />
                    <Main />
                  </div>
                </div>
                <div className="w-[5px] bg-[#e7e8e8]"><div className="h-[730px] rounded-b-[2px] bg-[#c9cacc]" /></div>
              </div>
            </div>
            <Rail />
          </div>
        </div>
        <RightEdge />
      </div>
      <div className="flex flex-1 justify-center pl-[292px] pt-[4px]"><i className="h-1 w-10 rounded-t bg-[#4a4f5c]" /></div>
    </div>
  );
}
